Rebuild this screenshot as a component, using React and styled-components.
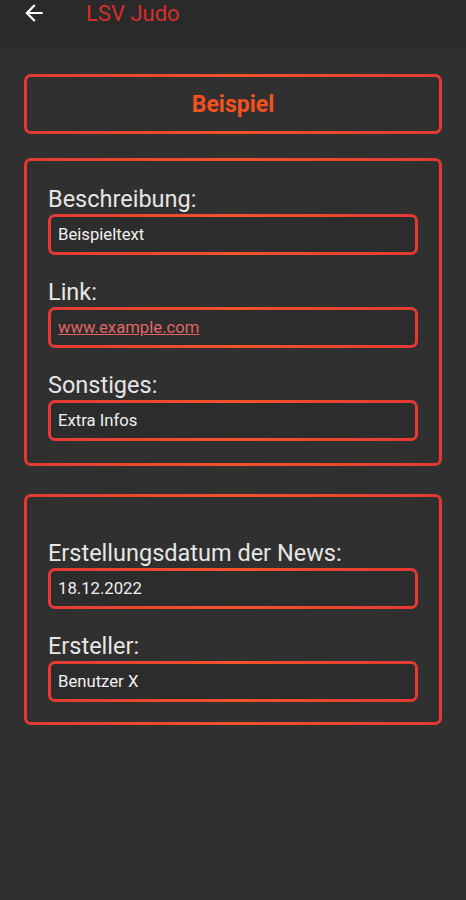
import React from 'react';
import styled, { createGlobalStyle } from 'styled-components';

const GlobalStyle = createGlobalStyle`
  html, body {
    margin: 0;
    padding: 0;
    background: #303030;
    font-family: Roboto, "Noto Sans", sans-serif;
  }
`;

const Page = styled.div`
  width: 466px;
  min-height: 900px;
  background: #303030;
`;

const TopBar = styled.header`
  height: 47px;
  background: #2a2a2a;
  border-bottom: 1px solid #262626;
  display: flex;
  align-items: flex-start;
  padding: 1px 0 0 21px;
  box-sizing: border-box;
`;

const BackButton = styled.button`
  background: none;
  border: none;
  padding: 0;
  width: 26px;
  height: 24px;
  display: flex;
  align-items: center;
  margin-right: 39px;
  cursor: pointer;
`;

const Title = styled.h1`
  margin: 0;
  font-size: 22px;
  font-weight: 400;
  line-height: 26px;
  color: #d32f2f;
`;

const Content = styled.main`
  padding: 27px 24px 0;
  display: flex;
  flex-direction: column;
`;

const Card = styled.section`
  border: 3px solid transparent;
  border-radius: 7px;
  background:
    linear-gradient(#303030, #303030) padding-box,
    linear-gradient(90deg, #e53935 0%, #f2542a 50%, #e53935 100%) border-box;
  box-sizing: border-box;
  margin-bottom: ${p => p.$gap || 0}px;
  padding: ${p => p.$pad || '0'};
`;

const HeadCard = styled(Card)`
  height: 60px;
  display: flex;
  align-items: center;
  justify-content: center;
`;

const Heading = styled.h2`
  margin: 0;
  font-size: 23px;
  font-weight: 700;
  color: #f4511e;
`;

const Field = styled.div`
  display: flex;
  flex-direction: column;
  & + & {
    margin-top: 24px;
  }
`;

const Label = styled.label`
  font-size: 23.5px;
  line-height: 26px;
  color: #e6e6e6;
  margin-bottom: 2px;
`;

const Value = styled.div`
  height: 41px;
  border: 3px solid transparent;
  border-radius: 7px;
  background:
    linear-gradient(#2c2c2c, #2c2c2c) padding-box,
    linear-gradient(90deg, #e53935 0%, #f2542a 50%, #e53935 100%) border-box;
  box-sizing: border-box;
  display: flex;
  align-items: center;
  padding-left: 7px;
  font-size: 16.7px;
  color: ${p => (p.$link ? '#e06666' : '#f0f0f0')};
  text-decoration: ${p => (p.$link ? 'underline' : 'none')};
`;

const BackArrow = () => (
  <svg width="26" height="26" viewBox="0 0 24 24">
    <path d="M20 11H7.83l5.59-5.59L12 4l-8 8 8 8 1.41-1.41L7.83 13H20v-2z" fill="#ffffff" />
  </svg>
);

export default function App() {
  return (
    <Page>
      <GlobalStyle />
      <TopBar>
        <BackButton>
          <BackArrow />
        </BackButton>
        <Title>LSV Judo</Title>
      </TopBar>
      <Content>
        <HeadCard $gap={24}>
          <Heading>Beispiel</Heading>
        </HeadCard>

        <Card $gap={28} $pad="25px 21px 22px">
          <Field>
            <Label>Beschreibung:</Label>
            <Value>Beispieltext</Value>
          </Field>
          <Field>
            <Label>Link:</Label>
            <Value $link>www.example.com</Value>
          </Field>
          <Field>
            <Label>Sonstiges:</Label>
            <Value>Extra Infos</Value>
          </Field>
        </Card>

        <Card $pad="43px 21px 20px">
          <Field>
            <Label>Erstellungsdatum der News:</Label>
            <Value>18.12.2022</Value>
          </Field>
          <Field>
            <Label>Ersteller:</Label>
            <Value>Benutzer X</Value>
          </Field>
        </Card>
      </Content>
    </Page>
  );
}
